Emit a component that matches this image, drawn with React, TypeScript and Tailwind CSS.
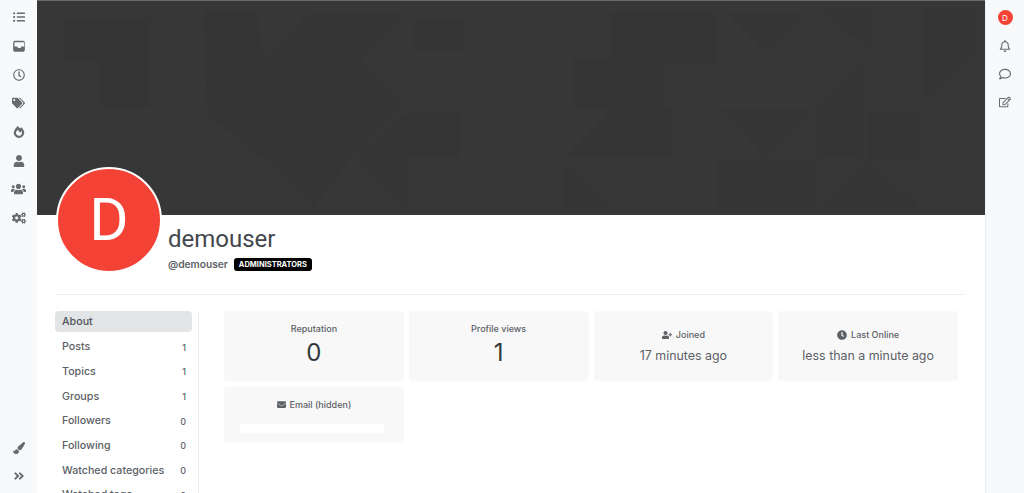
import {
  FaListUl,
  FaRegClock,
  FaTags,
  FaFireAlt,
  FaUser,
  FaUsers,
  FaCogs,
  FaPaintBrush,
  FaAngleDoubleRight,
  FaRegBell,
  FaRegComment,
  FaRegEdit,
  FaUserPlus,
  FaClock,
  FaEnvelope,
} from "react-icons/fa";

function TrayIcon({ className }: { className?: string }) {
  return (
    <svg className={className} viewBox="0 0 24 24" fill="currentColor">
      <path d="M5 3h14a3 3 0 0 1 3 3v13a3 3 0 0 1-3 3H5a3 3 0 0 1-3-3V6a3 3 0 0 1 3-3Zm0 2.5a.8.8 0 0 0-.8.8V13h4.6l1.6 2.6h4.200l1.600-2.600h4.600V6.300a.8.8 0 0 0-.8-.8H5Z" />
    </svg>
  );
}

const LEFT_NAV = [
  { icon: FaListUl, size: "w-3 h-3" },
  { icon: TrayIcon, size: "w-[14px] h-[14px]" },
  { icon: FaRegClock, size: "w-3 h-3" },
  { icon: FaTags, size: "w-[13px] h-3" },
  { icon: FaFireAlt, size: "w-3 h-3" },
  { icon: FaUser, size: "w-3 h-3" },
  { icon: FaUsers, size: "w-[15px] h-3" },
  { icon: FaCogs, size: "w-[14px] h-3" },
];

const MENU = [
  { label: "Posts", count: 1 },
  { label: "Topics", count: 1 },
  { label: "Groups", count: 1 },
  { label: "Followers", count: 0 },
  { label: "Following", count: 0 },
  { label: "Watched categories", count: 0 },
  { label: "Watched tags", count: 0 },
];

// darker triangles and squares of the cover pattern
const DARK_SHAPES = [
  "27,17 113,17 113,107 63,107 63,60 27,60",
  "167,10 220,10 227,60 317,153 277,207 230,160 170,113",
  "270,13 367,13 323,57 367,103 320,153 227,60",
  "377,17 427,17 427,50 377,50",
  "325,153 367,113 423,110 423,157 370,157 370,207 323,160",
  "573,10 680,10 680,63 573,63",
  "690,13 770,13 730,53",
  "783,7 836,7 836,53",
  "886,7 940,7 940,53 886,100",
  "536,57 626,57 626,107 635,107 635,157 527,157 576,107 536,107",
  "683,108 776,108 730,157",
  "680,158 780,158 780,207 680,207",
  "781,207 833,160 883,207",
  "830,110 883,110 883,160 830,160",
  "780,107 826,63 826,157 780,157",
  "526,160 573,207 526,207",
];

function StatCard({
  label,
  value,
  large,
  icon: Icon,
}: {
  label: string;
  value: string;
  large?: boolean;
  icon?: React.ComponentType<{ className?: string }>;
}) {
  return (
    <div className="h-[70px] rounded bg-[#f8f8f9] flex flex-col items-center">
      <div className={`flex items-center gap-1 text-[9px] font-medium text-[#5c6166] ${large ? "mt-[11px]" : "mt-[17px]"}`}>
        {Icon && <Icon className="w-[10px] h-[10px]" />}
        {label}
      </div>
      <div className={large ? "mt-[2px] text-[24px] leading-[30px] text-[#33383d]" : "mt-[5px] text-[12.400px] leading-[18px] text-[#5c6166]"}>
        {value}
      </div>
    </div>
  );
}

export default function App() {
  return (
    <div className="flex h-[493px] w-[1024px] overflow-hidden bg-white text-[#495057] font-['Inter','Liberation_Sans',sans-serif]">
      {/* Left rail */}
      <aside className="w-[37px] flex-shrink-0 bg-[#f8f9fa] flex flex-col items-center text-[#666b70]">
        <nav className="flex flex-col items-center pt-[3px]">
          {LEFT_NAV.map(({ icon: Icon, size }, i) => (
            <div key={i} className="h-[28.700px] flex items-center justify-center">
              <Icon className={size} />
            </div>
          ))}
        </nav>
        <div className="mt-auto flex flex-col items-center gap-[16px] pb-[11px]">
          <FaPaintBrush className="w-3 h-3" />
          <FaAngleDoubleRight className="w-3 h-3" />
        </div>
      </aside>

      {/* Main */}
      <main className="w-[948px] flex-shrink-0">
        <div className="relative h-[215px] bg-[#373737] border-t border-[#6b6b6b] overflow-hidden">
          <svg className="absolute inset-0" width="948" height="215" viewBox="0 0 948 215">
            {DARK_SHAPES.map((points) => (
              <polygon key={points} points={points} fill="#353535" />
            ))}
          </svg>
        </div>

        {/* Profile header */}
        <div className="flex pl-[19px] -mt-[48px] relative">
          <div className="w-[106px] h-[106px] rounded-full bg-[#f44336] border-2 border-white flex items-center justify-center text-white text-[60px] leading-none font-['Roboto',sans-serif]">
            D
          </div>
          <div className="pl-[6px] pt-[57px]">
            <div className="text-[24px] leading-[30px] text-[#42474d] font-['Roboto',sans-serif]">demouser</div>
            <div className="flex items-center gap-[6px] mt-[3px]">
              <span className="text-[10.200px] font-semibold text-[#5c6166]">@demouser</span>
              <span className="rounded-[3px] bg-black text-white text-[7.500px] font-bold px-[5px] h-[13px] flex items-center">
                ADMINISTRATORS
              </span>
            </div>
          </div>
        </div>

        <div className="mt-[21px] ml-[19px] mr-[20px] border-t border-[#eeeff0]" />

        {/* Body */}
        <div className="flex pt-[16px]">
          <div className="w-[144px] ml-[18px] flex-shrink-0 pr-[6px] border-r border-[#eeeff0]">
            <div className="h-[21px] rounded-sm bg-[#e2e4e6] flex items-center px-[7px] pt-[2px] text-[10.700px] font-medium text-[#50555b]">
              About
            </div>
            <ul className="pt-[3px]">
              {MENU.map((item) => (
                <li key={item.label} className="h-[24.700px] flex items-center justify-between pl-[7px] pr-[6px] text-[10.700px] font-medium text-[#5c6166]">
                  <span>{item.label}</span>
                  <span className="text-[9px]">{item.count}</span>
                </li>
              ))}
            </ul>
          </div>

          <div className="ml-[25px] w-[734px] grid grid-cols-4 gap-x-[5px] gap-y-[6px] content-start">
            <StatCard label="Reputation" value="0" large />
            <StatCard label="Profile views" value="1" large />
            <StatCard label="Joined" value="17 minutes ago" icon={FaUserPlus} />
            <StatCard label="Last Online" value="less than a minute ago" icon={FaClock} />
            <div className="h-[56px] rounded bg-[#f8f8f9] flex flex-col items-center">
              <div className="mt-[11px] flex items-center gap-1 text-[9px] font-medium text-[#5c6166]">
                <FaEnvelope className="w-[9px] h-[9px]" />
                Email (hidden)
              </div>
              <div className="mt-[12px] mr-[4px] w-[144px] h-[9px] bg-white" />
            </div>
          </div>
        </div>
      </main>

      {/* Right rail */}
      <aside className="flex-1 bg-[#f8f9fa] border-l border-[#eceef0] flex flex-col items-center text-[#666b70]">
        <div className="mt-[10px] w-[15px] h-[15px] rounded-full bg-[#f44336] text-white text-[8px] flex items-center justify-center">
          D
        </div>
        <div className="flex flex-col items-center gap-[16px] mt-[15px]">
          <FaRegBell className="w-3 h-3" />
          <FaRegComment className="w-3 h-3" />
          <FaRegEdit className="w-3 h-3" />
        </div>
      </aside>
    </div>
  );
}
